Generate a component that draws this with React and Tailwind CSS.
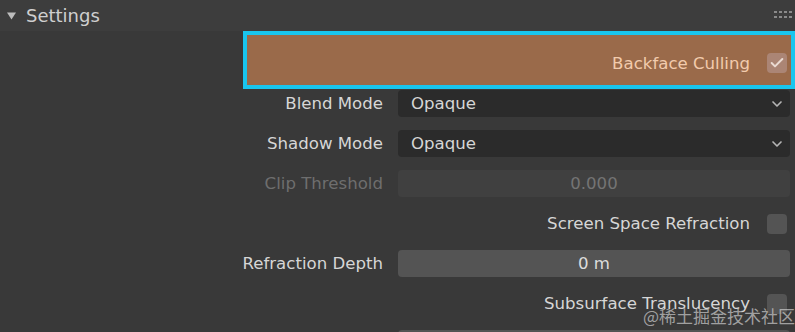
import { ChevronDown, Check } from 'lucide-react'

const font = { fontFamily: '"DejaVu Sans", "Noto Sans", sans-serif' }

function Label({ children, dim }) {
  return (
    <div
      className={`w-[383px] shrink-0 pt-[2px] text-right text-[16.6px] leading-none ${
        dim ? 'text-[#6e6e6e]' : 'text-[#d6d6d6]'
      }`}
    >
      {children}
    </div>
  )
}

function Dropdown({ value }) {
  return (
    <div className="ml-[15px] w-[392px] h-[27px] rounded-[4px] bg-[#2b2b2b] flex items-center justify-between pl-[13px] pr-[5px]">
      <span className="pt-[2px] text-[16.6px] text-[#d6d6d6] leading-none">{value}</span>
      <ChevronDown size={16} strokeWidth={2.5} className="text-[#b5b5b5]" />
    </div>
  )
}

function Field({ value, disabled }) {
  return (
    <div
      className={`ml-[15px] w-[392px] h-[27px] pt-[2px] rounded-[4px] flex items-center justify-center text-[16.6px] leading-none ${
        disabled ? 'bg-[#404040] text-[#747474]' : 'bg-[#545454] text-[#dcdcdc]'
      }`}
    >
      {value}
    </div>
  )
}

function CheckRow({ label }) {
  return (
    <div className="h-[27px] flex items-center justify-end gap-[17px] pr-[8px]">
      <span className="pt-[2px] text-[16.6px] text-[#d6d6d6] leading-none">{label}</span>
      <div className="w-[20px] h-[20px] rounded-[4px] bg-[#545454]" />
    </div>
  )
}

export default function App() {
  return (
    <div className="w-[795px] h-[332px] overflow-hidden bg-[#393939] relative" style={font}>
      {/* panel header */}
      <div className="h-[31px] bg-[#3d3d3d] flex items-center justify-between pl-[7px] pr-[3px]">
        <div className="flex items-center gap-[10px]">
          <svg width="9" height="8" viewBox="0 0 9 8">
            <path d="M0 0.5 L9 0.5 L4.5 7.5 Z" fill="#bdbdbd" />
          </svg>
          <span className="text-[18px] text-[#cfcfcf] leading-none">Settings</span>
        </div>
        <div className="grid grid-cols-4 gap-x-[2px] gap-y-[3px] mt-[-2px]">
          {Array.from({ length: 8 }).map((_, i) => (
            <div key={i} className="w-[3px] h-[2px] bg-[#8a8a8a]" />
          ))}
        </div>
      </div>

      {/* highlighted backface culling row */}
      <div className="pl-[243px]">
        <div className="h-[58px] border-[4px] border-[#19c6ee] bg-[#9a6a4a] flex items-center justify-end gap-[17px] pr-[4px] pt-[6px]">
          <span className="pt-[2px] text-[16.6px] text-[#f2cbad] leading-none">Backface Culling</span>
          <div className="w-[20px] h-[20px] rounded-[4px] bg-[#ab8575] flex items-center justify-center">
            <Check size={16} strokeWidth={3} className="text-[#eadad2]" />
          </div>
        </div>
      </div>

      <div className="mt-[1px] flex flex-col gap-[13px]">
        <div className="h-[27px] flex items-center">
          <Label>Blend Mode</Label>
          <Dropdown value="Opaque" />
        </div>
        <div className="h-[27px] flex items-center">
          <Label>Shadow Mode</Label>
          <Dropdown value="Opaque" />
        </div>
        <div className="h-[27px] flex items-center">
          <Label dim>Clip Threshold</Label>
          <Field value="0.000" disabled />
        </div>
        <CheckRow label="Screen Space Refraction" />
        <div className="h-[27px] flex items-center">
          <Label>Refraction Depth</Label>
          <Field value="0 m" />
        </div>
        <CheckRow label="Subsurface Translucency" />
        <div className="h-[27px] flex items-center">
          <Label></Label>
          <Field value="" />
        </div>
      </div>

      {/* watermark */}
      <div
        className="absolute right-[0px] bottom-[8px] text-[17px] text-[#d0d0d0]/70 leading-none"
        style={{ fontFamily: '"Noto Sans CJK SC", "Noto Sans", sans-serif' }}
      >
        @稀土掘金技术社区
      </div>
    </div>
  )
}
